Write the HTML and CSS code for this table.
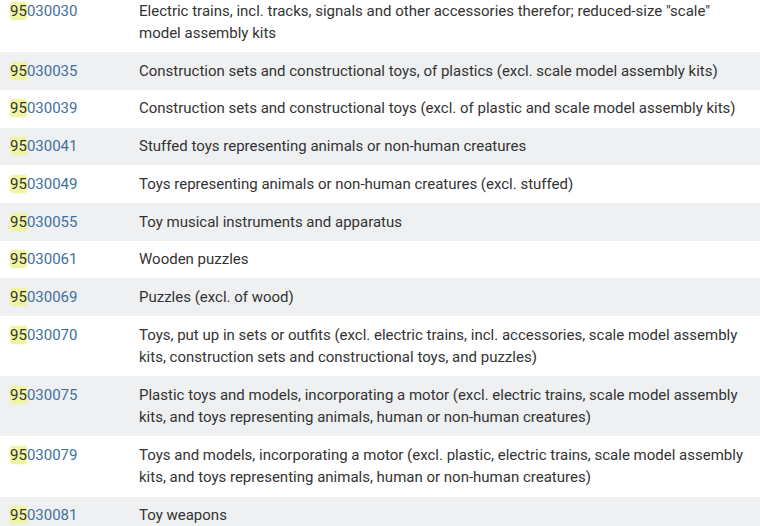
FILE: index.html
```html
<!DOCTYPE html>
<html>
<head>
<meta charset="utf-8">
<link rel="stylesheet" href="styles.css">
</head>
<body>
<div class="list">
  <div class="row"><div class="code"><mark>95</mark>030030</div><div class="desc">Electric trains, incl. tracks, signals and other accessories therefor; reduced-size "scale"<br>model assembly kits</div></div>
  <div class="row alt"><div class="code"><mark>95</mark>030035</div><div class="desc">Construction sets and constructional toys, of plastics (excl. scale model assembly kits)</div></div>
  <div class="row"><div class="code"><mark>95</mark>030039</div><div class="desc">Construction sets and constructional toys (excl. of plastic and scale model assembly kits)</div></div>
  <div class="row alt"><div class="code"><mark>95</mark>030041</div><div class="desc">Stuffed toys representing animals or non-human creatures</div></div>
  <div class="row"><div class="code"><mark>95</mark>030049</div><div class="desc">Toys representing animals or non-human creatures (excl. stuffed)</div></div>
  <div class="row alt"><div class="code"><mark>95</mark>030055</div><div class="desc">Toy musical instruments and apparatus</div></div>
  <div class="row"><div class="code"><mark>95</mark>030061</div><div class="desc">Wooden puzzles</div></div>
  <div class="row alt"><div class="code"><mark>95</mark>030069</div><div class="desc">Puzzles (excl. of wood)</div></div>
  <div class="row"><div class="code"><mark>95</mark>030070</div><div class="desc">Toys, put up in sets or outfits (excl. electric trains, incl. accessories, scale model assembly kits, construction sets and constructional toys, and puzzles)</div></div>
  <div class="row alt"><div class="code"><mark>95</mark>030075</div><div class="desc">Plastic toys and models, incorporating a motor (excl. electric trains, scale model assembly kits, and toys representing animals, human or non-human creatures)</div></div>
  <div class="row"><div class="code"><mark>95</mark>030079</div><div class="desc">Toys and models, incorporating a motor (excl. plastic, electric trains, scale model assembly kits, and toys representing animals, human or non-human creatures)</div></div>
  <div class="row alt"><div class="code"><mark>95</mark>030081</div><div class="desc">Toy weapons</div></div>
</div>
</body>
</html>
```

FILE: styles.css
```css
html, body {
  margin: 0;
  padding: 0;
  background: #ffffff;
  overflow: hidden;
}
body {
  font-family: Roboto, "Liberation Sans", sans-serif;
  font-size: 15px;
  line-height: 22.5px;
  color: #333333;
}
.list {
  margin-top: -8px;
  width: 760px;
}
.row {
  display: grid;
  grid-template-columns: 139px 1fr;
  padding: 7.6px 0;
  background: #ffffff;
}
.row.alt {
  background: #eef0f2;
}
.code {
  padding-left: 10px;
  color: #41709c;
}
.code mark {
  background: #f0f5a4;
  color: #333333;
  border-radius: 3px;
  box-shadow: 0 0 2px #f0f5a4;
}
.desc {
  padding-right: 12px;
}
```
